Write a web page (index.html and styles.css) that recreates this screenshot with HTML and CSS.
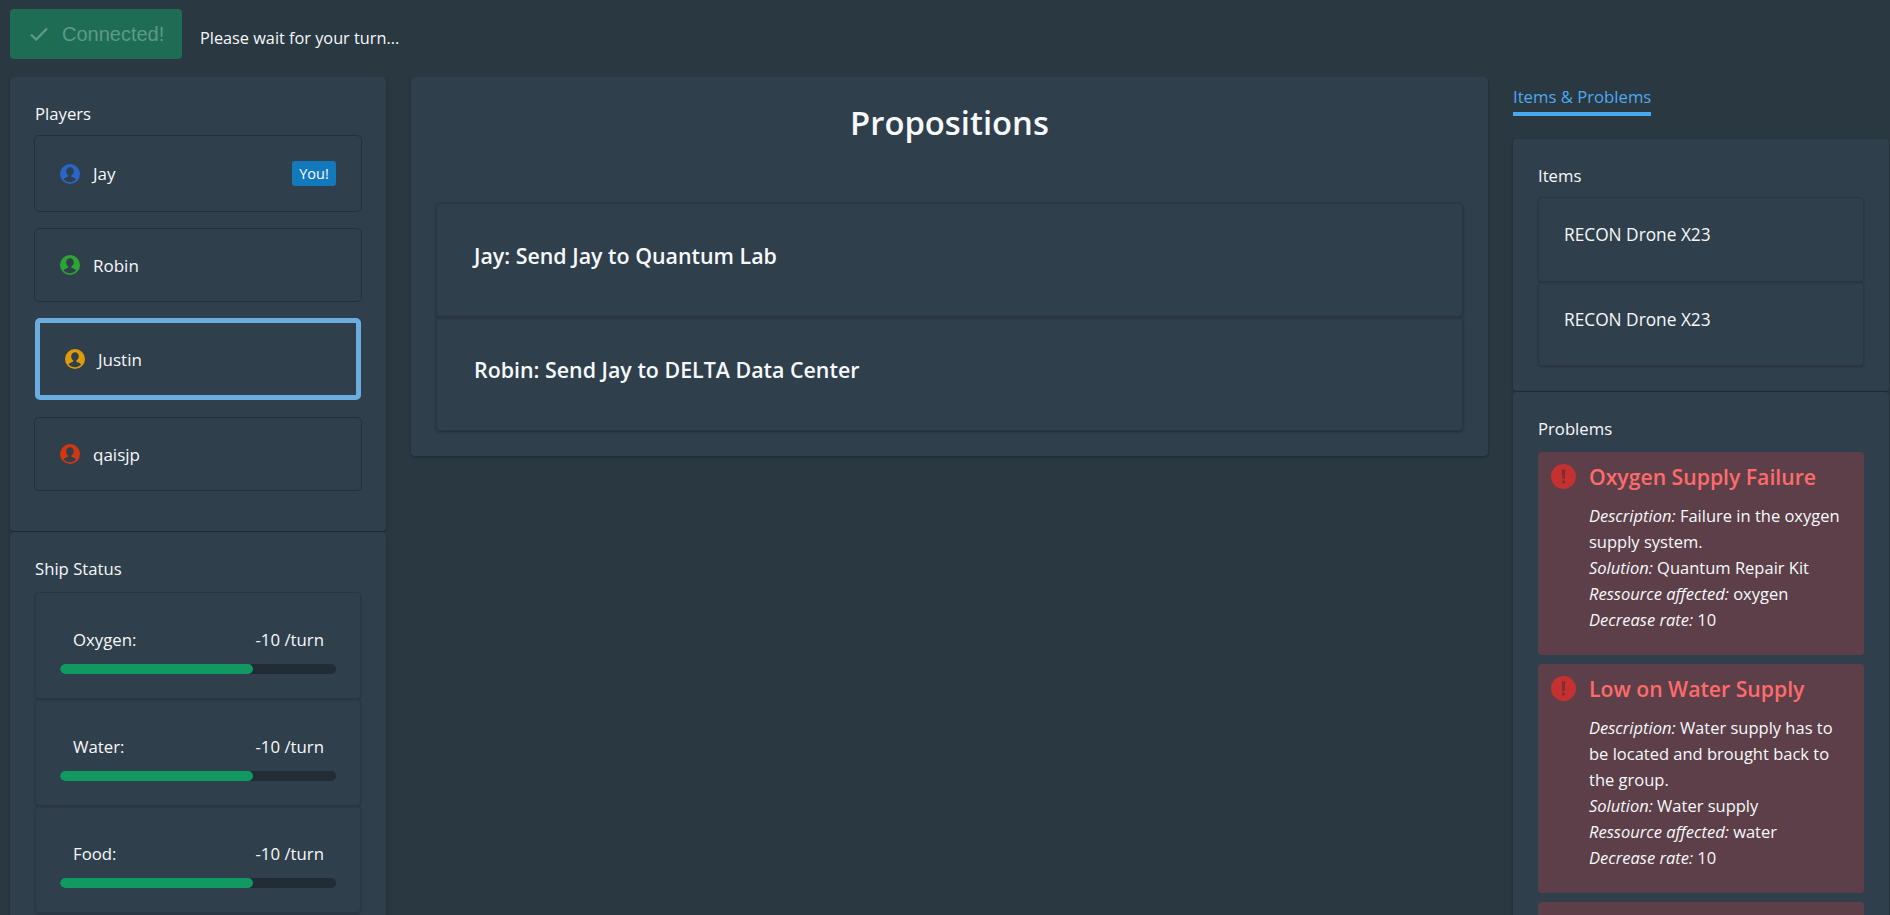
FILE: index.html
```html
<!DOCTYPE html>
<html lang="en">
<head>
<meta charset="utf-8">
<title>Game</title>
<link rel="stylesheet" href="styles.css">
</head>
<body>
<header class="topbar">
  <div class="connected">
    <svg class="check" viewBox="0 0 18 14" width="18" height="14"><path d="M1 7.5l5.2 5L17 1.5" fill="none" stroke="currentColor" stroke-width="2.4"/></svg>
    <span>Connected!</span>
  </div>
  <p class="wait">Please wait for your turn...</p>
</header>
<main class="layout">
  <aside class="column">
    <section class="panel players">
      <h2 class="panel-title">Players</h2>
      <div class="player">
        <svg class="avatar" viewBox="0 0 20 20"><circle cx="10" cy="10" r="10" fill="#2a66c8"/><path class="sil" d="M10 3.2c-2.3 0-3.8 1.8-3.8 4.2 0 1.7.8 3.2 2 4 .2.7 0 1.2-.8 1.5-1.6.6-3.2 1.2-3.9 2.7A8.6 8.6 0 0 0 10 18.2c2.4 0 4.5-.9 6.1-2.6-.8-1.5-2.4-2.1-4-2.7-.8-.3-1-.8-.7-1.5 1.2-.8 2.4-2.3 2.4-4 0-2.4-1.5-4.2-3.8-4.2z"/></svg>
        <span class="name">Jay</span>
        <span class="you">You!</span>
      </div>
      <div class="player robin">
        <svg class="avatar" viewBox="0 0 20 20"><circle cx="10" cy="10" r="10" fill="#2ca532"/><path class="sil" d="M10 3.2c-2.3 0-3.8 1.8-3.8 4.2 0 1.7.8 3.2 2 4 .2.7 0 1.2-.8 1.5-1.6.6-3.2 1.2-3.9 2.7A8.6 8.6 0 0 0 10 18.2c2.4 0 4.5-.9 6.1-2.6-.8-1.5-2.4-2.1-4-2.7-.8-.3-1-.8-.7-1.5 1.2-.8 2.4-2.3 2.4-4 0-2.4-1.5-4.2-3.8-4.2z"/></svg>
        <span class="name">Robin</span>
      </div>
      <div class="player active">
        <svg class="avatar" viewBox="0 0 20 20"><circle cx="10" cy="10" r="10" fill="#de9b0a"/><path class="sil" d="M10 3.2c-2.3 0-3.8 1.8-3.8 4.2 0 1.7.8 3.2 2 4 .2.7 0 1.2-.8 1.5-1.6.6-3.2 1.2-3.9 2.7A8.6 8.6 0 0 0 10 18.2c2.4 0 4.5-.9 6.1-2.6-.8-1.5-2.4-2.1-4-2.7-.8-.3-1-.8-.7-1.5 1.2-.8 2.4-2.3 2.4-4 0-2.4-1.5-4.2-3.8-4.2z"/></svg>
        <span class="name">Justin</span>
      </div>
      <div class="player last">
        <svg class="avatar" viewBox="0 0 20 20"><circle cx="10" cy="10" r="10" fill="#d2380f"/><path class="sil" d="M10 3.2c-2.3 0-3.8 1.8-3.8 4.2 0 1.7.8 3.2 2 4 .2.7 0 1.2-.8 1.5-1.6.6-3.2 1.2-3.9 2.7A8.6 8.6 0 0 0 10 18.2c2.4 0 4.5-.9 6.1-2.6-.8-1.5-2.4-2.1-4-2.7-.8-.3-1-.8-.7-1.5 1.2-.8 2.4-2.3 2.4-4 0-2.4-1.5-4.2-3.8-4.2z"/></svg>
        <span class="name">qaisjp</span>
      </div>
    </section>
    <section class="panel status">
      <h2 class="panel-title">Ship Status</h2>
      <div class="stat">
        <div class="stat-row"><span>Oxygen:</span><span>-10 /turn</span></div>
        <div class="bar"><div class="fill" style="width:70%"></div></div>
      </div>
      <div class="stat">
        <div class="stat-row"><span>Water:</span><span>-10 /turn</span></div>
        <div class="bar"><div class="fill" style="width:70%"></div></div>
      </div>
      <div class="stat">
        <div class="stat-row"><span>Food:</span><span>-10 /turn</span></div>
        <div class="bar"><div class="fill" style="width:70%"></div></div>
      </div>
    </section>
  </aside>
  <section class="center">
    <div class="panel propositions">
      <h1 class="heading">Propositions</h1>
      <div class="proposal">Jay: Send Jay to Quantum Lab</div>
      <div class="proposal">Robin: Send Jay to DELTA Data Center</div>
    </div>
  </section>
  <aside class="column right">
    <nav class="tabs"><a class="tab">Items &amp; Problems</a></nav>
    <section class="panel items">
      <h2 class="panel-title">Items</h2>
      <div class="item">RECON Drone X23</div>
      <div class="item">RECON Drone X23</div>
    </section>
    <section class="panel problems">
      <h2 class="panel-title">Problems</h2>
      <article class="problem">
        <svg class="alert" viewBox="0 0 25 25"><circle cx="12.5" cy="12.5" r="12.5" fill="#c53030"/><path d="M10.8 5.5h3.4l-.5 9.5h-2.4z" fill="#7c2d35"/><rect x="11" y="16.5" width="3" height="3" rx="1" fill="#7c2d35"/></svg>
        <div class="problem-body">
          <h3 class="problem-title">Oxygen Supply Failure</h3>
          <p><em>Description:</em> Failure in the oxygen supply system.<br><em>Solution:</em> Quantum Repair Kit<br><em>Ressource affected:</em> oxygen<br><em>Decrease rate:</em> 10</p>
        </div>
      </article>
      <article class="problem">
        <svg class="alert" viewBox="0 0 25 25"><circle cx="12.5" cy="12.5" r="12.5" fill="#c53030"/><path d="M10.8 5.5h3.4l-.5 9.5h-2.4z" fill="#7c2d35"/><rect x="11" y="16.5" width="3" height="3" rx="1" fill="#7c2d35"/></svg>
        <div class="problem-body">
          <h3 class="problem-title">Low on Water Supply</h3>
          <p><em>Description:</em> Water supply has to be located and brought back to the group.<br><em>Solution:</em> Water supply<br><em>Ressource affected:</em> water<br><em>Decrease rate:</em> 10</p>
        </div>
      </article>
      <article class="problem stub"></article>
    </section>
  </aside>
</main>
</body>
</html>
```
FILE: styles.css
```css
* { box-sizing: border-box; }
html { overflow: hidden; height: 915px; }
body {
  margin: 0;
  height: 915px;
  overflow: hidden;
  background: #2a3842;
  color: #f6f9fb;
  font-family: "Open Sans", "Noto Sans", sans-serif;
  font-size: 16.5px;
}
.topbar {
  display: flex;
  align-items: center;
  height: 77px;
  padding: 9px 0 18px 10px;
}
.connected {
  display: flex;
  align-items: center;
  gap: 14px;
  width: 172px;
  height: 50px;
  padding-left: 20px;
  border-radius: 4px;
  background: #1f6c55;
  color: #5c9a85;
  font-family: "Liberation Sans", sans-serif;
  font-size: 20px;
}
.check { flex: none; }
.wait { margin: 8px 0 0 18px; font-size: 16.3px; }
.layout {
  display: grid;
  grid-template-columns: 376px 1fr 376px;
  column-gap: 25px;
  align-items: start;
  height: 838px;
  overflow: hidden;
  padding: 0 1px 0 10px;
}
.column { display: flex; flex-direction: column; }
.panel {
  background: #303f4c;
  border-radius: 4px;
  box-shadow: 0 1px 3px rgba(0, 0, 0, .3);
  padding: 26px 25px;
}
.panel-title {
  margin: 0 0 10px;
  font-size: 16.7px;
  font-weight: 400;
  line-height: 22px;
}
.players { height: 454px; margin-bottom: 1px; }
.player {
  display: flex;
  align-items: center;
  height: 77px;
  margin: 0 -1px 16px;
  padding: 0 25px;
  border: 1px solid #25303b;
  border-radius: 5px;
  font-size: 17px;
}
.player.robin { height: 74px; }
.player.active { height: 82px; margin: 0 0 17px; padding: 0 25px; border: 5px solid #6aaee0; }
.player.last { height: 74px; margin-bottom: 0; }
.avatar { width: 20px; height: 20px; margin-right: 13px; flex: none; }
.sil { fill: #303f4c; }
.you {
  margin-left: auto;
  width: 44px;
  height: 25px;
  text-align: center;
  line-height: 25px;
  border-radius: 3px;
  background: #1279bd;
  font-size: 14.5px;
}
.status .panel-title { margin-bottom: 12px; }
.stat {
  height: 107px;
  padding: 35px 24px 0;
  border: 1px solid #2a3743;
  border-radius: 4px;
  box-shadow: 0 1px 2px rgba(0, 0, 0, .2);
}
.stat-row {
  display: flex;
  justify-content: space-between;
  padding: 0 12px 0 13px;
  font-size: 16.8px;
  line-height: 24px;
}
.bar {
  height: 10px;
  margin-top: 12px;
  border-radius: 5px;
  background: #212c36;
  overflow: hidden;
}
.fill { height: 100%; border-radius: 5px; background: #109a62; }
.propositions { height: 379px; padding: 25px; }
.heading {
  margin: 0 0 59px;
  text-align: center;
  font-size: 32.8px;
  font-weight: 600;
  line-height: 42px;
}
.proposal {
  height: 114px;
  padding: 38px 37px 0;
  border: 1px solid #2a3743;
  border-radius: 4px;
  box-shadow: 0 1px 3px rgba(0, 0, 0, .3);
  font-size: 21.4px;
  font-weight: 600;
  line-height: 27px;
}
.tabs { height: 62px; padding-top: 8px; }
.tab {
  display: inline-block;
  height: 29px;
  border-bottom: 4px solid #4aa8ee;
  color: #4ea8ee;
  font-size: 16.7px;
  line-height: 20px;
}
.items { height: 252px; margin-bottom: 1px; }
.item {
  height: 84.5px;
  padding: 26px 25px 0;
  border: 1px solid #2a3743;
  border-radius: 4px;
  box-shadow: 0 1px 2px rgba(0, 0, 0, .2);
  font-size: 17.3px;
  line-height: 22px;
}
.problems { height: 700px; }
.problems .panel-title { margin-bottom: 12px; }
.problem {
  display: flex;
  margin-bottom: 9px;
  padding: 12px 13px 22px;
  border-radius: 4px;
  background: #5d3f49;
}
.problem.stub { height: 120px; }
.alert { flex: none; width: 25px; height: 25px; margin-right: 13px; }
.problem-title {
  margin: 0 0 13px;
  color: #ff6b6b;
  font-size: 21.2px;
  font-weight: 600;
  line-height: 26px;
}
.problem-body p { margin: 0; font-size: 16.5px; line-height: 26px; }
```
